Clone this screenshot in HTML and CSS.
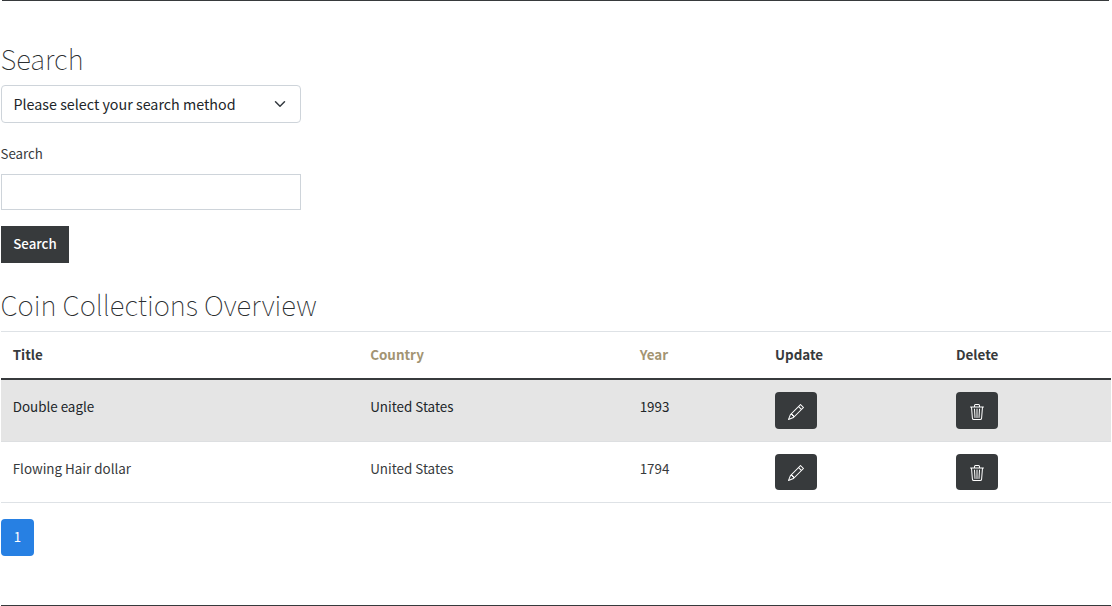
FILE: index.html
```html
<!DOCTYPE html>
<html lang="en">
<head>
<meta charset="utf-8">
<title>Coin Collections Overview</title>
<link rel="stylesheet" href="styles.css">
</head>
<body>
<svg class="symbols" aria-hidden="true">
<symbol id="pencil" viewBox="0 0 16 16"><path d="M12.146.146a.5.5 0 0 1 .708 0l3 3a.5.5 0 0 1 0 .708l-10 10a.5.5 0 0 1-.168.11l-5 2a.5.5 0 0 1-.65-.65l2-5a.5.5 0 0 1 .11-.168l10-10zM11.207 2.5 13.5 4.793 14.793 3.5 12.5 1.207 11.207 2.5zm1.586 3L10.5 3.207 4 9.707V10h.5a.5.5 0 0 1 .5.5v.5h.5a.5.5 0 0 1 .5.5v.5h.293l6.5-6.5zm-9.761 5.175-.106.106-1.528 3.821 3.821-1.528.106-.106A.5.5 0 0 1 5 12.5V12h-.5a.5.5 0 0 1-.5-.5V11h-.5a.5.5 0 0 1-.468-.325z"/></symbol>
<symbol id="trash" viewBox="0 0 16 16"><path d="M6.5 1h3a.5.5 0 0 1 .5.5v1H6v-1a.5.5 0 0 1 .5-.5ZM11 2.5v-1A1.5 1.5 0 0 0 9.500 0h-3A1.500 1.500 0 0 0 5 1.500v1H2.506a.58.58 0 0 0-.01 0H1.500a.5.5 0 0 0 0 1h.538l.853 10.660A2 2 0 0 0 4.885 16h6.230a2 2 0 0 0 1.994-1.840l.853-10.660h.538a.5.5 0 0 0 0-1h-.995a.59.59 0 0 0-.010 0H11Zm1.958 1-.846 10.580a1 1 0 0 1-.997.920h-6.230a1 1 0 0 1-.997-.920L3.042 3.500h9.916Zm-7.487 1a.5.5 0 0 1 .528.470l.5 8.500a.5.5 0 0 1-.998.060L5 5.030a.5.5 0 0 1 .470-.530Zm5.058 0a.5.5 0 0 1 .470.530l-.5 8.500a.5.5 0 1 1-.998-.060l.5-8.500a.5.5 0 0 1 .528-.470ZM8 4.500a.5.5 0 0 1 .5.5v8.500a.5.5 0 0 1-1 0V5a.5.5 0 0 1 .5-.5Z"/></symbol>
</svg>
<main class="page">
<h2 class="heading search-heading">Search</h2>
<div class="select"><span>Please select your search method</span>
<svg class="chevron" viewBox="0 0 16 16"><path d="m2 5 6 6 6-6"/></svg></div>
<label class="label" for="q">Search</label>
<input class="input" id="q" type="text">
<button class="submit">Search</button>
<h2 class="heading overview-heading">Coin Collections Overview</h2>
<div class="table">
<div class="row head"><span>Title</span><span class="sort">Country</span><span class="sort">Year</span><span>Update</span><span>Delete</span></div>
<div class="row striped"><span class="text">Double eagle</span><span class="text">United States</span><span class="text">1993</span><span><button class="action"><svg><use href="#pencil"/></svg></button></span><span><button class="action"><svg><use href="#trash"/></svg></button></span></div>
<div class="row last"><span class="text">Flowing Hair dollar</span><span class="text">United States</span><span class="text">1794</span><span><button class="action"><svg><use href="#pencil"/></svg></button></span><span><button class="action"><svg><use href="#trash"/></svg></button></span></div>
</div>
<nav><a class="page-link">1</a></nav>
</main>
</body>
</html>
```
FILE: styles.css
```css
* { box-sizing: border-box; }
body { margin: 0; background: #fff; color: #373a3c; font-family: "Source Sans Pro", "Noto Sans CJK JP", "Open Sans", sans-serif; font-size: 13.3px; line-height: 22px; }
.symbols { display: none; }
.page { display: flex; flex-direction: column; align-items: flex-start; height: 606px; margin: 0 1px; overflow: hidden; border-bottom: 1px solid #373a3c; }
.page::before { content: ""; width: 1107px; height: 1px; margin-left: 1px; background: #373a3c; flex: none; }
.heading { margin: 0 0 0 -0.5px; color: #2b2e30; font-size: 27.6px; line-height: 36px; font-weight: 100; white-space: nowrap; }
.search-heading { margin-top: 39px; }
.select { display: flex; align-items: center; justify-content: space-between; width: 300px; height: 38px; margin-top: 9px; padding: 0 14px 0 11.5px; border: 1px solid #ced4da; border-radius: 4px; color: #212529; font-size: 14.3px; }
.chevron { width: 12px; height: 12px; fill: none; stroke: #343a40; stroke-width: 2; stroke-linecap: round; stroke-linejoin: round; }
.label { margin: 20px 0 0 -0.5px; }
.input { width: 300px; height: 36px; margin-top: 9px; padding: 6px 12px; border: 1px solid #ced4da; }
.submit { width: 68px; height: 37px; margin-top: 16px; padding: 0 0 2px; border: 0; background: #373a3c; color: #fff; font: inherit; font-weight: 500; }
.overview-heading { margin-top: 23px; }
.table { align-self: stretch; margin-top: 9px; border-top: 1px solid #dee2e6; }
.row { display: grid; grid-template-columns: 357.5px 269.5px 135px 181px 1fr; height: 62px; border-bottom: 1px solid #dee2e6; }
.row > span { padding: 12px 12px 12px 11.7px; }
.row > .text { padding-top: 15px; font-size: 13.4px; }
.head { height: 48px; border-bottom: 2px solid #373a3c; font-size: 13.4px; font-weight: 700; }
.head > span { padding-top: 11px; }
.sort { color: #a39472; }
.striped { background: #e5e5e5; border-bottom-color: #dddfe1; color: #212529; }
.last { height: 61px; }
.action { display: flex; align-items: center; justify-content: center; width: 42px; height: 37px; padding: 3px 0 0; border: 0; border-radius: 4px; background: #373a3c; }
.row > span:nth-child(n+4) { padding-left: 12px; }
.last .action { height: 36px; padding-top: 2px; }
.action svg { width: 16px; height: 16px; fill: #fff; }
.page-link { display: block; width: 33px; height: 37px; margin-top: 16px; border-radius: 4px; background: #2780e3; color: #fff; line-height: 35px; text-align: center; }
```
